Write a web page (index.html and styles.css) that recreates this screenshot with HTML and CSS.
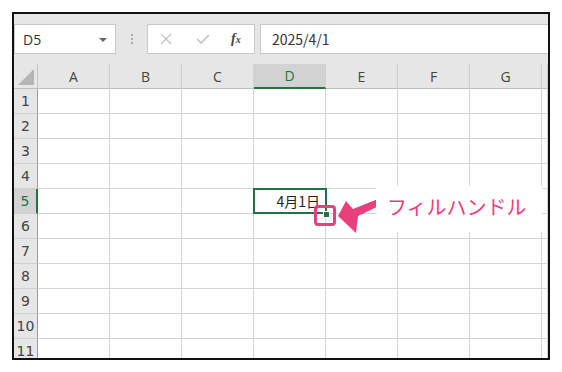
FILE: index.html
```html
<!DOCTYPE html>
<html lang="ja">
<head>
<meta charset="utf-8">
<link rel="stylesheet" href="styles.css">
</head>
<body>
<div class="frame">
  <div class="toolbar">
    <div class="namebox"><span>D5</span><span class="caret"></span></div>
    <div class="grip"><i></i><i></i><i></i></div>
    <div class="fbtns">
      <svg class="ic" width="14" height="14" viewBox="0 0 14 14"><path d="M2 2 L12 12 M12 2 L2 12" stroke="#c4c4c4" stroke-width="1.4" fill="none"/></svg>
      <svg class="ic" width="16" height="14" viewBox="0 0 16 14"><path d="M2 7 L6 11 L14 3" stroke="#c4c4c4" stroke-width="1.6" fill="none"/></svg>
      <span class="fx">f<sub>x</sub></span>
    </div>
    <div class="finput">2025/4/1</div>
  </div>
  <div class="sheet">
    <div class="corner"><span class="tri"></span></div>
    <div class="ch">A</div><div class="ch">B</div><div class="ch">C</div><div class="ch sel">D</div><div class="ch">E</div><div class="ch">F</div><div class="ch">G</div><div class="ch"></div>

    <div class="rh">1</div><div class="c"></div><div class="c"></div><div class="c"></div><div class="c"></div><div class="c"></div><div class="c"></div><div class="c"></div><div class="c"></div>
    <div class="rh">2</div><div class="c"></div><div class="c"></div><div class="c"></div><div class="c"></div><div class="c"></div><div class="c"></div><div class="c"></div><div class="c"></div>
    <div class="rh">3</div><div class="c"></div><div class="c"></div><div class="c"></div><div class="c"></div><div class="c"></div><div class="c"></div><div class="c"></div><div class="c"></div>
    <div class="rh">4</div><div class="c"></div><div class="c"></div><div class="c"></div><div class="c"></div><div class="c"></div><div class="c"></div><div class="c"></div><div class="c"></div>
    <div class="rh sel">5</div><div class="c"></div><div class="c"></div><div class="c"></div><div class="c active">4月1日<span class="handle"></span></div><div class="c"></div><div class="c"></div><div class="c"></div><div class="c"></div>
    <div class="rh">6</div><div class="c"></div><div class="c"></div><div class="c"></div><div class="c"></div><div class="c"></div><div class="c"></div><div class="c"></div><div class="c"></div>
    <div class="rh">7</div><div class="c"></div><div class="c"></div><div class="c"></div><div class="c"></div><div class="c"></div><div class="c"></div><div class="c"></div><div class="c"></div>
    <div class="rh">8</div><div class="c"></div><div class="c"></div><div class="c"></div><div class="c"></div><div class="c"></div><div class="c"></div><div class="c"></div><div class="c"></div>
    <div class="rh">9</div><div class="c"></div><div class="c"></div><div class="c"></div><div class="c"></div><div class="c"></div><div class="c"></div><div class="c"></div><div class="c"></div>
    <div class="rh">10</div><div class="c"></div><div class="c"></div><div class="c"></div><div class="c"></div><div class="c"></div><div class="c"></div><div class="c"></div><div class="c"></div>
    <div class="rh">11</div><div class="c"></div><div class="c"></div><div class="c"></div><div class="c"></div><div class="c"></div><div class="c"></div><div class="c"></div><div class="c"></div>
  </div>
  <div class="hl-box"></div>
  <svg class="arrow" width="48" height="40" viewBox="0 0 48 40">
    <path d="M2 20 L10 5 L17 13 L42 3 L45 9 L22 20 L20 37 Z" fill="#e8407c"/>
  </svg>
  <div class="label">フィルハンドル</div>
</div>
</body>
</html>
```
FILE: styles.css
```css
* { box-sizing: border-box; }
body { margin: 0; background: #fff; font-family: "Noto Sans CJK JP", sans-serif; }
.frame {
  position: relative;
  margin: 12px 0 0 12px;
  width: 538px;
  height: 348px;
  border: 2px solid #111;
  overflow: hidden;
  background: #fff;
}
.toolbar {
  height: 50px;
  background: #e6e6e6;
  display: flex;
  align-items: flex-start;
  padding-top: 10px;
}
.namebox {
  width: 102px;
  height: 30px;
  background: #fff;
  border: 1px solid #c8c8c8;
  display: flex;
  align-items: center;
  justify-content: space-between;
  padding: 0 8px 0 8px;
  font-family: "Open Sans", "Liberation Sans", sans-serif;
  font-size: 14px;
  color: #333;
}
.caret {
  width: 0; height: 0;
  border-left: 4px solid transparent;
  border-right: 4px solid transparent;
  border-top: 4px solid #666;
  margin-top: 1px;
}
.grip {
  width: 31px;
  height: 30px;
  display: flex;
  flex-direction: column;
  align-items: center;
  justify-content: center;
  gap: 2px;
}
.grip i { display: block; width: 2px; height: 2px; background: #aaa; }
.fbtns {
  width: 108px;
  height: 30px;
  background: #fff;
  border: 1px solid #c8c8c8;
  display: flex;
  align-items: center;
  padding-left: 11px;
  gap: 22px;
}
.fx {
  font-family: "Liberation Serif", serif;
  font-style: italic;
  font-weight: bold;
  font-size: 14px;
  color: #444;
  margin-left: -2px;
}
.fx sub { font-size: 10px; vertical-align: 0; }
.finput {
  flex: 1;
  margin-left: 5px;
  height: 30px;
  background: #fff;
  border: 1px solid #c8c8c8;
  border-right: none;
  display: flex;
  align-items: center;
  padding-left: 11px;
  font-size: 14px;
  color: #333;
}
.sheet {
  display: grid;
  grid-template-columns: 24px repeat(7, 72px) 1fr;
  grid-template-rows: 25px;
  grid-auto-rows: 25px;
}
.corner, .ch, .rh {
  background: #e6e6e6;
  border-right: 1px solid #c6c6c6;
  border-bottom: 1px solid #bdbdbd;
  color: #444;
  display: flex;
  align-items: center;
  justify-content: center;
  font-family: "Open Sans", "Liberation Sans", sans-serif;
  font-size: 14px;
}
.ch { border-right-color: #cfcfcf; }
.corner { position: relative; }
.tri {
  position: absolute;
  right: 3px; bottom: 3px;
  width: 0; height: 0;
  border-left: 16px solid transparent;
  border-bottom: 16px solid #b5b5b5;
}
.ch.sel {
  background: #d2d2d2;
  border-bottom: 2px solid #217346;
  color: #217346;
}
.rh {
  font-family: "DejaVu Sans", sans-serif;
  font-size: 14px;
  color: #444;
  border-bottom-color: #d0d0d0;
  border-right-color: #9a9a9a;
}
.rh.sel {
  background: #d2d2d2;
  color: #217346;
  border-right: 2px solid #217346;
}
.c {
  border-right: 1px solid #d4d4d4;
  border-bottom: 1px solid #d4d4d4;
}
.c.active {
  position: relative;
  font-size: 14px;
  color: #222;
  display: flex;
  align-items: center;
  justify-content: flex-end;
  padding-right: 5px;
}
.c.active::after {
  content: "";
  position: absolute;
  left: -1px; top: -1px; right: -2px; bottom: -1px;
  border: 2px solid #217346;
}
.handle {
  position: absolute;
  right: -5px; bottom: -5px;
  width: 7px; height: 7px;
  background: #217346;
  border: 1px solid #fff;
  z-index: 2;
}
.hl-box {
  position: absolute;
  left: 300px; top: 191px;
  width: 22px; height: 21px;
  border: 3px solid #e8407c;
  border-radius: 4px;
}
.arrow {
  position: absolute;
  left: 322px; top: 182px;
}
.label {
  position: absolute;
  left: 362px; top: 172px;
  width: 166px; height: 46px;
  background: #fff;
  color: #e8407c;
  font-size: 20px;
  padding-left: 11px;
  padding-top: 6px;
  letter-spacing: 0;
}
```
